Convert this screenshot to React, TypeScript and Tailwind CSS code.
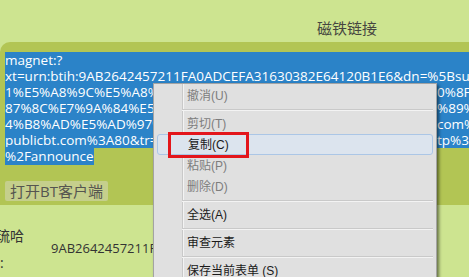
import React from "react";

const LINES = [
  { left: "magnet:?" },
  { left: "xt=urn:btih:9AB2642457211FA0ADCEFA31630382E64120B1E6&dn=%5Bsus%5D" },
  { left: "1%E5%A8%9C%E5%A8%81%E4%B8%8E%E6%9C%BA%E5%99%A8%E4%BA%BA", right: "0%8F%E7%9A%84" },
  { left: "87%8C%E7%9A%84%E5%A6%B9%E5%A6%B9%E4%BB%AC%E5%9C%A8%E5%AE", right: "%89%E5%8F%8C" },
  { left: "4%B8%AD%E5%AD%97%E5%B9%95%5D&tr=http%3A%2F%2Ftracker.", right: "com%3A80" },
  { left: "publicbt.com%3A80&tr=http%3A%2F%2Ftracker.openbit", right: "tp%3A%2F" },
];

type MenuItem =
  | { sep: true }
  | { label: string; disabled?: boolean; active?: boolean };

const MENU: MenuItem[] = [
  { label: "撤消(U)", disabled: true },
  { sep: true },
  { label: "剪切(T)", disabled: true },
  { label: "复制(C)", active: true },
  { label: "粘贴(P)", disabled: true },
  { label: "删除(D)", disabled: true },
  { sep: true },
  { label: "全选(A)" },
  { sep: true },
  { label: "审查元素" },
  { sep: true },
  { label: "保存当前表单 (S)" },
];

const ContextMenu = () => (
  <div className="absolute left-[153px] top-[83px] w-[284px] h-[210px] border border-[#a3a3a3] bg-[#e0e0e0] pt-[1px] shadow-[2px_2px_3px_rgba(0,0,0,0.5)] font-['Liberation_Sans','Noto_Sans_CJK_SC',sans-serif] text-[12px]">
    <div className="absolute left-[28px] top-0 bottom-0 w-[2px] border-l border-[#c9c9c9] bg-[#f3f3f3]" />
    {MENU.map((item, i) =>
      "sep" in item ? (
        <div key={i} className="relative h-[7px] ml-[28px] mr-[3px] flex flex-col justify-center">
          <div className="h-[1px] bg-[#c9c9c9]" />
          <div className="h-[1px] bg-[#f3f3f3]" />
        </div>
      ) : (
        <div
          key={i}
          className={
            item.active
              ? "relative mx-[3px] h-[21px] pl-[30px] flex items-center rounded-[3px] border border-[#abc6e6] bg-[#dce4ee] text-[#1a1a1a]"
              : item.disabled
              ? "relative mx-[3px] h-[21px] pl-[30px] flex items-center text-[#7d7d7d]"
              : "relative mx-[3px] h-[21px] pl-[30px] flex items-center text-[#1a1a1a]"
          }
        >
          {item.label}
        </div>
      )
    )}
    <div className="absolute left-[14px] top-[48px] w-[81px] h-[26px] border-[3px] border-[#e3161c]" />
  </div>
);

export default function App() {
  return (
    <div className="relative w-[469px] h-[277px] overflow-hidden bg-[#cde490] font-['Open_Sans','Noto_Sans_CJK_SC',sans-serif]">
      <div className="h-[42px] pl-[317px] pt-[19px] text-[15px] leading-[18px] text-[#464640]">
        磁铁链接
      </div>
      <div className="h-[163px] rounded-tl-[10px] bg-[#b2c554] pt-[10px] pl-[5px]">
        <div className="bg-[#2b83c8] text-white text-[13.5px] leading-[16px]">
          {LINES.map((line, i) => (
            <div key={i} className="flex whitespace-nowrap overflow-hidden">
              {line.right ? (
                <>
                  <span className="w-[432px] shrink-0 overflow-hidden">{line.left}</span>
                  <span>{line.right}</span>
                </>
              ) : (
                <span>{line.left}</span>
              )}
            </div>
          ))}
        </div>
        <div className="text-white text-[13.5px] leading-[16px]">
          <span className="bg-[#2b83c8]">%2Fannounce</span>
        </div>
        <button className="mt-[17px] h-[20px] px-[5px] rounded-[2px] bg-[#c5cf8c] text-[15px] leading-[20px] text-[#555550]">
          打开BT客户端
        </button>
      </div>
      <div className="flex pt-[22px] text-[#333] text-[13px]">
        <div className="w-[55px] -ml-[4px] flex flex-col">
          <span className="text-[14px] leading-[18px]">琉哈</span>
          <span className="mt-[9px] ml-[4px] text-[14px] leading-[18px]">:</span>
        </div>
        <div className="pt-[13px] leading-[16px] whitespace-nowrap">9AB2642457211FA0ADCEFA</div>
      </div>
      <ContextMenu />
    </div>
  );
}
